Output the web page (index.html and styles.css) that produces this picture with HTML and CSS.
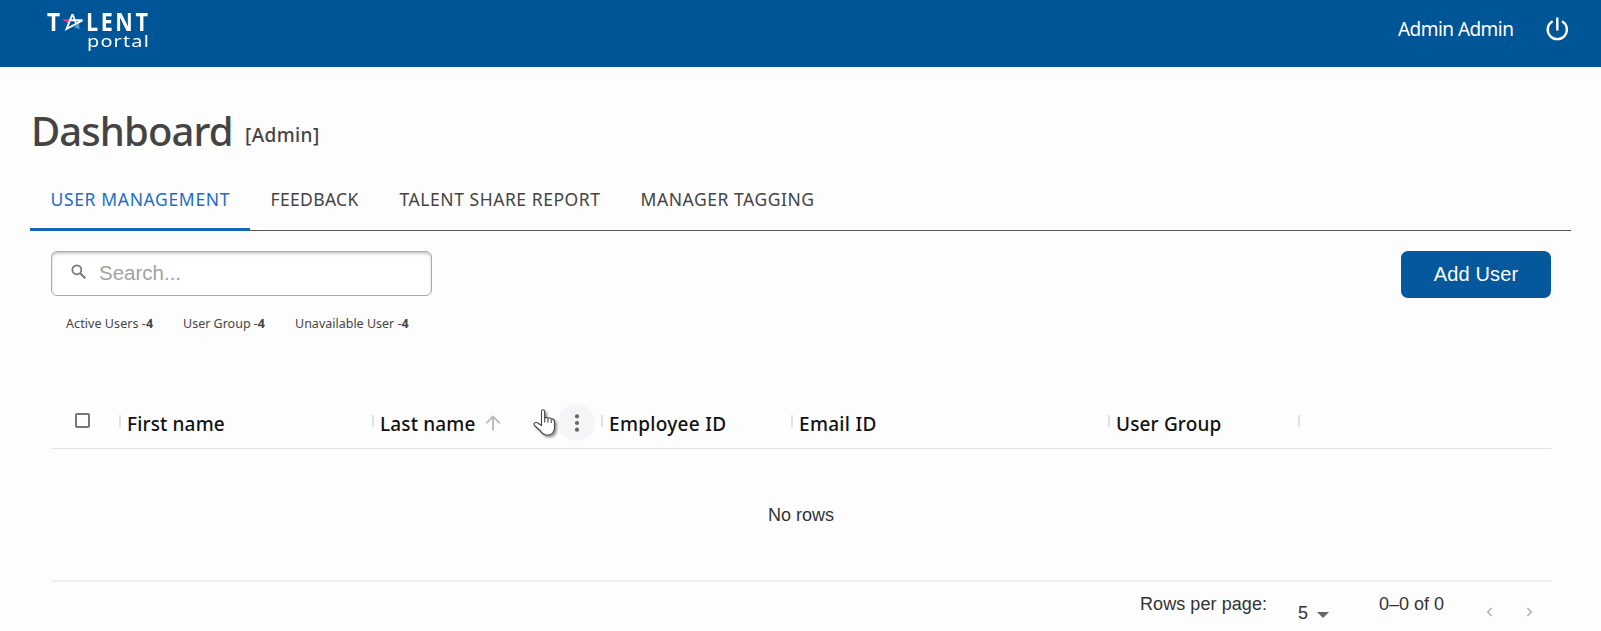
FILE: index.html
```html
<!DOCTYPE html>
<html lang="en">
<head>
<meta charset="utf-8">
<title>Talent Portal</title>
<link rel="stylesheet" href="styles.css">
</head>
<body>
<header class="topbar">
  <div class="logo">
    <div class="logo-top"><span class="logo-t">T</span><svg class="logo-star" width="24" height="20" viewBox="0 0 24 20"><path d="M0 7.300h8l-1.500 4.500z" fill="#f0308c"/><path d="M12 15l5-3.500.5 6z" fill="#4ba3dc"/><path d="M10.500 2L4.500 17L20.500 8.300H8.500M10.500 2L14.500 12.500" fill="none" stroke="#fff" stroke-width="1.900"/></svg><span class="logo-lent">LENT</span></div>
    <div class="logo-bottom">portal</div>
  </div>
  <div class="account">
    <span class="account-name">Admin Admin</span>
    <svg class="power" width="24" height="26" viewBox="0 0 24 26"><path d="M12.300 .5v13M7.600 4.200a9.600 9.600 0 1 0 9.400 0" fill="none" stroke="#fff" stroke-width="2.400"/></svg>
  </div>
</header>
<main class="page">
  <div class="heading"><h1 class="title">Dashboard</h1><span class="role">[Admin]</span></div>
  <nav class="tabs">
    <a class="tab tab-users active">USER MANAGEMENT</a>
    <a class="tab tab-feedback">FEEDBACK</a>
    <a class="tab tab-report">TALENT SHARE REPORT</a>
    <a class="tab tab-tagging">MANAGER TAGGING</a>
  </nav>
  <section class="panel">
    <div class="toolbar">
      <div class="search"><svg width="16" height="16" viewBox="0 0 16 16"><circle cx="5.800" cy="5.800" r="4.500" fill="none" stroke="#757575" stroke-width="1.700"/><path d="M9.200 9.200l5 5" stroke="#757575" stroke-width="2"/></svg><span class="placeholder">Search...</span></div>
      <button class="add">Add User</button>
    </div>
    <div class="stats">
      <span class="stat stat-active">Active Users -<b>4</b></span>
      <span class="stat stat-group">User Group -<b>4</b></span>
      <span class="stat stat-away">Unavailable User -<b>4</b></span>
    </div>
    <div class="grid-head">
      <div class="cell check"><span class="checkbox"></span></div>
      <div class="cell first"><span class="label l-first">First name</span></div>
      <div class="cell last"><span class="label l-last">Last name</span><svg class="sort" width="16" height="16" viewBox="0 0 16 16"><path d="M8 15.500V1.500M1.200 8.300L8 1.500l6.800 6.800" fill="none" stroke="#b9b9b9" stroke-width="1.800"/></svg><span class="menu"><svg width="6" height="18" viewBox="0 0 6 18"><g fill="#666"><circle cx="3" cy="2.300" r="2.100"/><circle cx="3" cy="9" r="2.100"/><circle cx="3" cy="15.700" r="2.100"/></g></svg></span>
        <svg class="pointer" width="26" height="30" viewBox="0 0 26 30"><path d="M8.500 2.500Q8.500 .8 10 .8T11.700 2.700V9Q13.500 7.500 15 9.200Q16.800 8 18 10Q21 9.500 21.500 12.500V19.500Q20.500 25.500 15.500 26H13Q9.500 25.500 7.500 22L1.500 16.500Q.3 14.500 2 13.700Q4 13 5.500 14.500L8.500 16.500Z" fill="#fff" stroke="#444" stroke-width="1.100" stroke-linejoin="round"/><path d="M11.700 9v4.500M15 9.500v4M18.200 10.500v3.500" stroke="#444" stroke-width="1.100"/></svg>
      </div>
      <div class="cell employee"><span class="label l-employee">Employee ID</span></div>
      <div class="cell email"><span class="label l-email">Email ID</span></div>
      <div class="cell group"><span class="label l-group">User Group</span></div>
      <div class="cell end"></div>
    </div>
    <div class="empty">No rows</div>
    <footer class="pager">
      <span class="per-page">Rows per page:</span>
      <span class="size">5<svg width="12" height="6" viewBox="0 0 12 6"><path d="M0 0h12L6 6z" fill="#666"/></svg></span>
      <span class="range">0–0 of 0</span>
      <svg class="prev" width="7" height="10" viewBox="0 0 7 10"><path d="M5.700 1L1.700 5l4 4" fill="none" stroke="#b4b4b4" stroke-width="1.600"/></svg>
      <svg class="next" width="7" height="10" viewBox="0 0 7 10"><path d="M1.300 1l4 4-4 4" fill="none" stroke="#b4b4b4" stroke-width="1.600"/></svg>
    </footer>
  </section>
</main>
</body>
</html>
```
FILE: styles.css
```css
* { box-sizing: border-box; }
body { margin: 0; height: 631px; overflow: hidden; background: #fdfdfd; color: #444; font-family: "Noto Sans", "Open Sans", sans-serif; }
svg { display: block; flex: none; }
span, a, button { white-space: nowrap; }

.topbar { height: 67px; background: #005596; color: #fff; display: flex; justify-content: space-between; }
.logo { padding: 12px 0 0 47px; width: 170px; }
.logo-top { display: flex; height: 19px; line-height: 19px; font-family: "Open Sans", "Noto Sans", sans-serif; font-size: 25px; font-weight: 700; }
.logo-t { width: 15px; transform: scaleX(0.900); transform-origin: 0 0; }
.logo-star { width: 24px; }
.logo-lent { letter-spacing: 3px; transform: scaleX(0.860); transform-origin: 0 0; }
.logo-bottom { width: 60px; margin: 1px 0 0 40px; height: 17px; line-height: 17px; font-size: 17px; letter-spacing: 1px; transform: scaleX(1.170); transform-origin: 0 0; }
.account { display: flex; padding-right: 32px; }
.account-name { width: 147px; margin-top: 16px; line-height: 26px; font-size: 19px; letter-spacing: -0.550px; }
.power { margin-top: 17px; }

.page { padding: 34px 30px 0; }
.heading { display: flex; height: 62px; }
.title { margin: 0 0 0 1px; width: 214px; font-size: 40px; line-height: 60px; font-weight: 500; letter-spacing: -0.900px; }
.role { margin-top: 21px; line-height: 26px; font-size: 19px; font-weight: 500; letter-spacing: 0.400px; }
.tabs { display: flex; height: 68px; border-bottom: 1px solid #555; }
.tab { padding: 24px 0 0 20.500px; height: 68px; font-size: 17.500px; line-height: 24px; letter-spacing: 0.550px; }
.tab-users { width: 220px; letter-spacing: 0.650px; }
.tab-feedback { width: 129px; letter-spacing: 0.350px; }
.tab-report { width: 241px; }
.active { color: #1b6ec7; border-bottom: 3px solid #1565b8; }

.panel { padding: 20px 20px 0 21px; }
.toolbar { display: flex; justify-content: space-between; height: 47px; }
.search { display: flex; width: 381px; height: 45px; padding: 0 0 0 19px; border: 1px solid #aaa; border-radius: 6px; box-shadow: inset 0 2px 3px #ccc; background: #fff; }
.search svg { margin-top: 12px; }
.placeholder { margin: 8px 0 0 12px; font: 20.500px/26px "Liberation Sans", Arial, sans-serif; color: #a2a2a2; }
.add { width: 150px; height: 47px; padding: 0; border: 0; border-radius: 7px; background: #05589b; color: #fff; font: 20px "Liberation Sans", Arial, sans-serif; letter-spacing: 0.150px; }
.stats { display: flex; height: 89px; padding: 16px 0 0 15px; font-size: 12.500px; line-height: 20px; }
.stat-active { width: 117px; letter-spacing: 0.070px; }
.stat-group { width: 112px; }
.grid-head { display: flex; height: 62px; border-bottom: 1px solid #e3e3e5; color: #111; }
.cell { position: relative; display: flex; height: 61px; padding: 23px 0 0 7px; line-height: 28px; font-size: 19px; font-weight: 500; letter-spacing: 0.150px; }
.cell:not(.check)::before { content: ""; position: absolute; left: -1px; top: 28px; width: 2px; height: 12px; background: #e2e2e4; }
.check { width: 69px; padding: 26px 0 0 24px; }
.checkbox { width: 15px; height: 15px; border: 2px solid #777; border-radius: 2px; }
.first { width: 253px; }
.last { width: 229px; }
.employee { width: 190px; letter-spacing: 0.300px; }
.email { width: 317px; letter-spacing: 0.300px; }
.group { width: 190px; }
.l-last { width: 105px; }
.sort { margin-top: 5px; }
.menu { width: 37px; height: 37px; margin: -6px 0 0 57px; border-radius: 50%; background: #f5f5f7; display: flex; align-items: center; justify-content: center; }
.pointer { position: absolute; left: 160px; top: 22px; filter: drop-shadow(2px 2px 1px #999); }
.empty { height: 131px; padding-top: 53px; text-align: center; font: 18px/26px "Liberation Sans", Arial, sans-serif; color: #333; }
.pager { display: flex; border-top: 2px solid #efeff0; padding-left: 1089px; font: 18px/22px "Liberation Sans", Arial, sans-serif; color: #333; }
.per-page { width: 158px; padding-top: 11px; letter-spacing: 0.070px; }
.size { display: flex; width: 81px; padding-top: 20px; }
.size svg { margin: 10px 0 0 9px; }
.range { width: 107px; padding-top: 11px; }
.prev, .next { margin-top: 25px; }
.next { margin-left: 33px; }
```
